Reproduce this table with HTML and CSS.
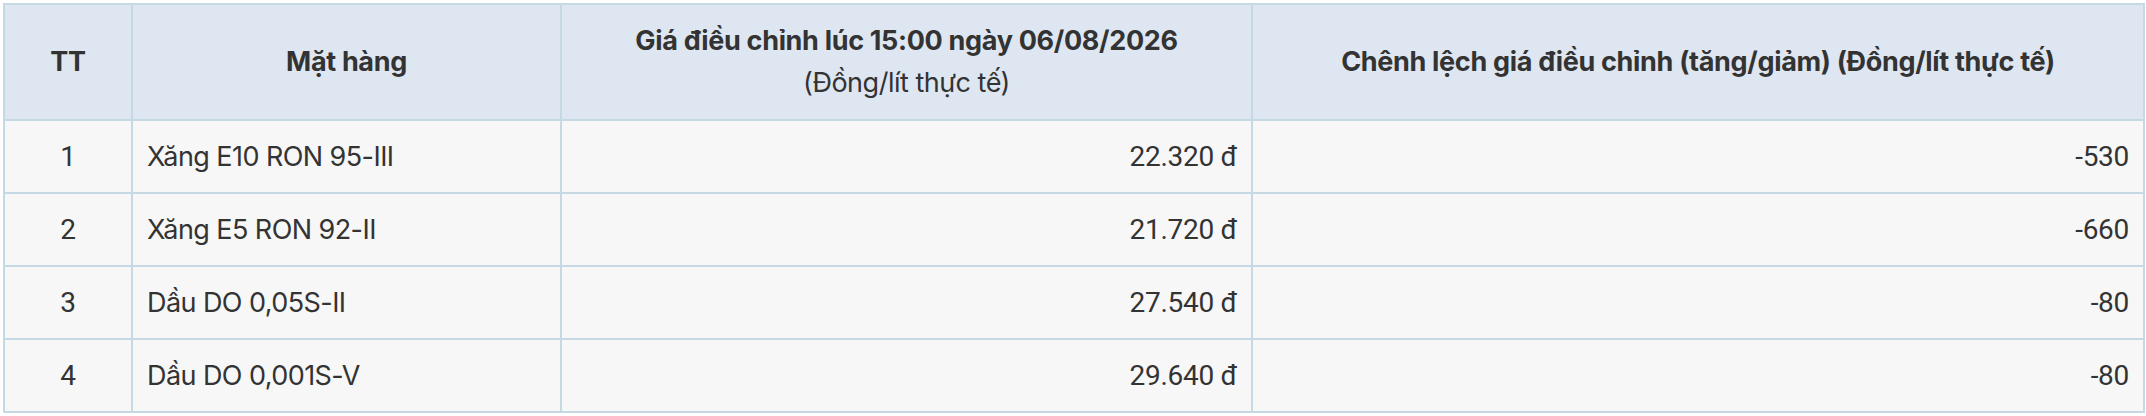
FILE: index.html
```html
<!DOCTYPE html>
<html lang="vi">
<head>
<meta charset="utf-8">
<title>Giá xăng dầu</title>
<link rel="stylesheet" href="styles.css">
</head>
<body>
<div class="wrap">
<table class="price-table">
  <colgroup>
    <col class="c-tt">
    <col class="c-name">
    <col class="c-price">
    <col class="c-diff">
  </colgroup>
  <thead>
    <tr>
      <th>TT</th>
      <th>Mặt hàng</th>
      <th>Giá điều chỉnh lúc 15:00 ngày 06/08/2026<br><span class="sub">(Đồng/lít thực tế)</span></th>
      <th>Chênh lệch giá điều chỉnh (tăng/giảm) (Đồng/lít thực tế)</th>
    </tr>
  </thead>
  <tbody>
    <tr><td class="num center">1</td><td class="name">Xăng E10 RON 95-III</td><td class="num right">22.320 đ</td><td class="num right">-530</td></tr>
    <tr><td class="num center">2</td><td class="name">Xăng E5 RON 92-II</td><td class="num right">21.720 đ</td><td class="num right">-660</td></tr>
    <tr><td class="num center">3</td><td class="name">Dầu DO 0,05S-II</td><td class="num right">27.540 đ</td><td class="num right">-80</td></tr>
    <tr><td class="num center">4</td><td class="name">Dầu DO 0,001S-V</td><td class="num right">29.640 đ</td><td class="num right">-80</td></tr>
  </tbody>
</table>
</div>
</body>
</html>
```
FILE: styles.css
```css
html, body {
  margin: 0;
  padding: 0;
  background: #ffffff;
}
.wrap {
  padding: 3px 2px 0 3px;
}
.price-table {
  width: 2140px;
  border-collapse: collapse;
  table-layout: fixed;
  font-family: Inter, "Noto Sans", sans-serif;
  font-size: 27px;
  color: #333333;
}
.c-tt { width: 128px; }
.c-name { width: 429px; }
.c-price { width: 691px; }
.c-diff { width: 892px; }
.price-table th,
.price-table td {
  border: 2px solid #c4d9e4;
  padding: 0 14px;
}
.price-table th {
  background: #dee6f1;
  font-weight: 700;
  height: 114px;
  text-align: center;
  line-height: 42px;
  letter-spacing: -0.012em;
}
.price-table th .sub {
  font-weight: 400;
  letter-spacing: -0.018em;
}
.price-table td {
  background: #f7f7f7;
  height: 71px;
  line-height: 34px;
}
.price-table td.name {
  letter-spacing: -0.021em;
}
.price-table td.num {
  font-family: Roboto, Inter, sans-serif;
  font-size: 28px;
  letter-spacing: -0.01em;
}
.center { text-align: center; }
.right { text-align: right; }
```
